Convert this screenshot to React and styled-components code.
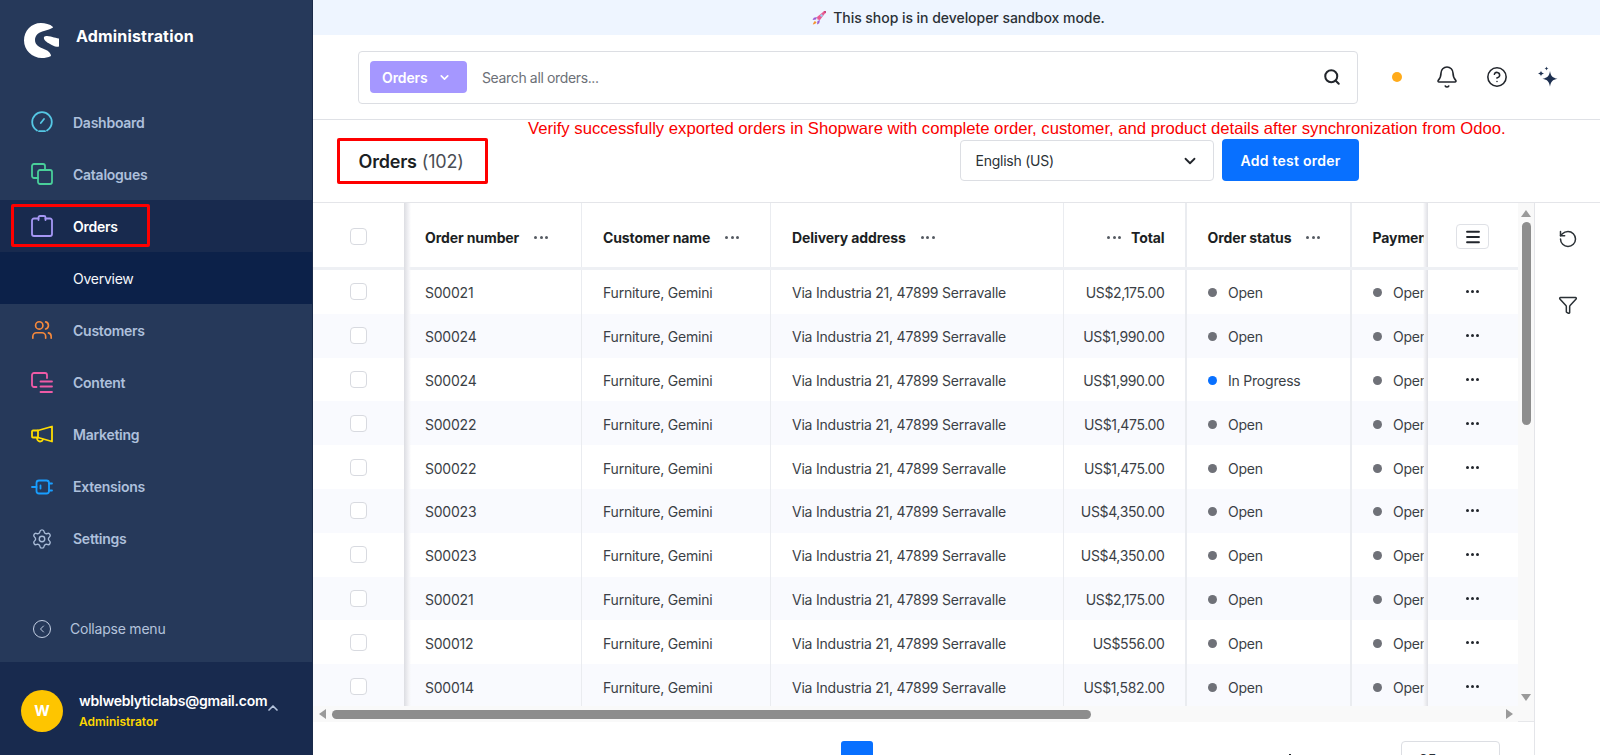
import React from "react";
import styled, { createGlobalStyle } from "styled-components";
import { Users, Settings, ChevronDown, ChevronUp, ChevronLeft, Search, Bell, CircleHelp, RotateCcw, Filter, Menu } from "lucide-react";

const Global = createGlobalStyle`
  html, body { margin: 0; padding: 0; height: 100%; overflow: hidden; background: #fff; }
  body { font-family: Inter, "Noto Sans", sans-serif; font-size: 14px; color: #2b3136; }
  * { box-sizing: border-box; }
`;

const Page = styled.div`display: flex; width: 1600px; height: 755px; overflow: hidden;`;

const Sidebar = styled.aside`
  width: 313px; flex: none; height: 100%; display: flex; flex-direction: column;
  background: #26395a; border-right: 1px solid #1a2a49;
`;
const Brand = styled.div`
  height: 96px; flex: none; display: flex; align-items: flex-start; gap: 16px; padding: 22px 0 0 24px;
`;
const BrandName = styled.span`font-size: 16px; font-weight: 700; color: #fff; line-height: 28px; letter-spacing: .18px;`;
const Nav = styled.nav`display: flex; flex-direction: column; padding-top: 0;`;
const NavRow = styled.div`
  position: relative; height: 52.1px; display: flex; align-items: center; gap: 20px; padding-left: 31px;
  font-size: 14px; font-weight: 600; letter-spacing: -.25px;
  color: ${p => p.$active ? "#fff" : p.$sub ? "#f6f8fc" : "#aec0dc"};
  background: ${p => p.$active ? "#182a4e" : p.$sub ? "#0c2149" : "transparent"};
  ${p => p.$sub && "padding-left: 73px; font-weight: 400;"}
`;
const RedFrame = styled.div`
  position: absolute; left: 11px; top: 4px; width: 139px; height: 43px;
  border: 3px solid #fe0000; border-radius: 2px;
`;
const IconSlot = styled.span`
  width: 22px; height: 22px; display: inline-flex; align-items: center; justify-content: center; flex: none;
  color: ${p => p.$c};
`;
const Collapse = styled.div`
  margin-top: auto; height: 33px; margin-bottom: 17px; display: flex; align-items: center; gap: 19px; padding-left: 33px;
  color: #b4c3dc; font-size: 14px; font-weight: 400; letter-spacing: -.22px;
`;
const CollapseCircle = styled.span`
  width: 18px; height: 18px; border-radius: 50%; border: 1.5px solid #c3cfe3; display: inline-flex;
  align-items: center; justify-content: center; color: #c3cfe3;
`;
const Account = styled.div`
  height: 93px; flex: none; background: #182a4e; display: flex; align-items: center; padding: 4px 0 0 21px; gap: 16px;
`;
const Avatar = styled.div`
  width: 42px; height: 42px; border-radius: 50%; background: #fec500; color: #fff; font-weight: 700; font-size: 15px;
  display: flex; align-items: center; justify-content: center; flex: none;
`;
const AccountText = styled.div`display: flex; flex-direction: column; gap: 4px; width: 188px;`;
const Email = styled.span`font-size: 14px; font-weight: 600; color: #fff; white-space: nowrap; line-height: 18px; letter-spacing: -.24px;`;
const Role = styled.span`font-size: 12px; font-weight: 600; color: #fed700; line-height: 16px;`;
const AccountChevron = styled.span`color: #b4c3dc; display: inline-flex; margin: -5px 0 0 -18px;`;

const Main = styled.main`flex: 1; min-width: 0; height: 100%; display: flex; flex-direction: column;`;
const Banner = styled.div`
  height: 35px; flex: none; background: #eef5ff; display: flex; align-items: center; justify-content: center; gap: 6px;
  font-size: 14px; font-weight: 500; color: #2b3136; letter-spacing: -.04px; padding-left: 3px;
`;
const TopBar = styled.header`
  height: 85px; flex: none; display: flex; align-items: center; padding: 0 0 0 45px; border-bottom: 1.5px solid #dfe1e6;
`;
const SearchBox = styled.div`
  width: 1000px; height: 53px; flex: none; border: 1.5px solid #dcdee3; border-radius: 4px; display: flex; align-items: center;
  padding: 0 16px 0 11px;
`;
const ScopeTag = styled.div`
  width: 97px; height: 32px; border-radius: 4px; background: #a597ff; color: #fff; font-weight: 600; font-size: 14px;
  display: flex; align-items: center; gap: 10px; padding-left: 12px; letter-spacing: -.1px;
`;
const Placeholder = styled.span`margin-left: 15px; color: #6c7077; font-size: 14px; flex: 1; letter-spacing: -.36px;`;
const TopActions = styled.div`display: flex; align-items: center; margin-left: 34px; gap: 28px;`;
const StatusDot = styled.span`width: 10px; height: 10px; border-radius: 50%; background: #ffab1b; margin-right: 6px;`;
const BellIcon = styled(Bell)`margin: 0 -1px;`;

const SectionBar = styled.section`
  position: relative; height: 83px; flex: none; display: flex; align-items: flex-start; padding: 18px 241px 0 24px;
  border-bottom: 1.5px solid #e4e5e9;
`;
const Annotation = styled.div`
  position: absolute; left: 215px; top: 0; font-family: "Liberation Sans", Arial, sans-serif; font-size: 16.68px; color: #f90000;
  line-height: 18px; white-space: nowrap;
`;
const Title = styled.h1`
  margin: 0; padding: 0 0 0 18.500px; height: 46px; width: 151px; border: 3px solid #fe0000; border-radius: 2px; display: flex; align-items: center; gap: 5px;
  font-size: 18px; font-weight: 600; color: #1c1f24; white-space: nowrap; letter-spacing: -.2px;
  span { font-weight: 400; color: #4a4e55; }
`;
const SectionControls = styled.div`margin-left: auto; margin-top: 1px; display: flex; gap: 8px; align-items: flex-start;`;
const LangSelect = styled.div`
  width: 254px; height: 41px; margin-top: 1px; border: 1.5px solid #dcdee3; border-radius: 4px; display: flex; align-items: center; justify-content: space-between;
  padding: 0 14px 0 14.500px; font-size: 14px; color: #2b3136; letter-spacing: -.25px;
`;
const PrimaryButton = styled.button`
  width: 137px; height: 42px; border: 0; border-radius: 4px; background: #0870ff; color: #fff; font: 600 14px Inter, sans-serif; letter-spacing: .25px;
`;

const Body = styled.div`flex: 1; min-height: 0; display: flex;`;
const Content = styled.div`width: 1222px; flex: none; display: flex; flex-direction: column; border-right: 1.5px solid #e4e5e9;`;
const Rail = styled.div`flex: 1; display: flex; flex-direction: column; align-items: center; gap: 46px; padding-top: 26px; color: #2b3136;`;

const TableFrame = styled.div`height: 519px; flex: none; display: flex; border-bottom: 1.5px solid #e6e7ea;`;
const TableColumn = styled.div`width: 1205px; flex: none; display: flex; flex-direction: column;`;
const Table = styled.div`height: 503px; overflow: hidden; flex: none;`;
const Row = styled.div`
  display: flex; height: ${p => p.$head ? "67px" : "43.8px"};
  background: ${p => p.$odd ? "#f9fafe" : "#fff"};
  ${p => p.$head && "border-bottom: 3px solid #eef0f4;"}
`;
const CheckCell = styled.div`
  position: relative; width: 91px; flex: none; display: flex; align-items: center; justify-content: center; padding: ${p => p.$head ? "3px 1px 0 0" : "0 1px 0 0"};
  &::after { content: ""; position: absolute; top: 0; bottom: ${p => p.$head ? "-3px" : "0"}; right: -7px; width: 7px; background: linear-gradient(90deg, #dcdde2, #f4f4f7 70%, transparent); z-index: 1; }
`;
const CheckBox = styled.span`width: 17px; height: 17px; border: 1.5px solid #d8dae0; border-radius: 4px; background: #fff; display: block;`;
const Scroller = styled.div`flex: 1; min-width: 0; display: flex; overflow: hidden;`;
const Cell = styled.div`
  width: ${p => p.$w}px; flex: none; display: flex; align-items: center; padding: ${p => p.$head ? "5px 20px 0 21px" : "2px 20px 0 21px"}; white-space: nowrap;
  ${p => p.$right && "justify-content: flex-end;"}
  ${p => !p.$last && `border-right: ${p.$thick ? 2 : 1}px solid #eaecf0;`}
  color: ${p => p.$head ? "#1c1f24" : "#3b3f46"};
  font-weight: ${p => p.$head ? 700 : 400};
  letter-spacing: ${p => p.$head ? "-.1px" : p.$right ? "-.36px" : "-.22px"};
`;
const HeadDots = styled.span`
  color: #555a62; display: inline-flex; gap: 2.500px; margin-left: ${p => p.$ml ?? 15}px; margin-right: ${p => p.$mr ?? 0}px;
  i { width: 3px; height: 3px; border-radius: 50%; background: currentColor; display: block; }
`;
const Dot = styled.span`width: 9px; height: 9px; border-radius: 50%; background: ${p => p.$c}; flex: none; margin: 0 11.500px 0 0;`;
const ActionCell = styled.div`
  position: relative; width: 90px; flex: none; display: flex; align-items: center; justify-content: center; padding: ${p => p.$head ? "3px 1px 0 0" : "0 1px 0 0"};
  background: inherit;
  &::before { content: ""; position: absolute; top: 0; bottom: 0; left: -5px; width: 5px; background: linear-gradient(270deg, #dfe0e5, #f3f3f6 70%, transparent); }
`;
const RowMenu = styled.span`
  display: inline-flex; gap: 2px; color: #22262c;
  i { width: 3px; height: 3px; border-radius: 50%; background: currentColor; display: block; }
`;
const MenuButton = styled.button`
  width: 33px; height: 25px; border: 1.5px solid #dfe1e6; border-radius: 4px; background: #fff; display: flex; align-items: center; justify-content: center; padding: 0; color: #22262c;
`;
const HScroll = styled.div`height: 16px; flex: none; background: #f9f9f9; display: flex; align-items: center; padding: 0 5px 0 6px; gap: 6px;`;
const HThumb = styled.div`height: 9px; width: 759px; border-radius: 5px; background: #8d8d8d;`;
const VScroll = styled.div`width: 16px; flex: none; background: #f9f9f9; display: flex; flex-direction: column; align-items: center; padding-top: 7px;`;
const VThumb = styled.div`width: 9px; height: 203px; border-radius: 5px; background: #8d8d8d; margin: 5px 0 auto;`;
const ArrowGlyph = styled.span`
  width: 0; height: 0; display: block; flex: none;
  ${p => p.$d === "up" && "border-left: 5px solid transparent; border-right: 5px solid transparent; border-bottom: 7px solid #9a9a9a;"}
  ${p => p.$d === "down" && "border-left: 5px solid transparent; border-right: 5px solid transparent; border-top: 7px solid #9a9a9a; margin-bottom: 20px;"}
  ${p => p.$d === "left" && "border-top: 5px solid transparent; border-bottom: 5px solid transparent; border-right: 7px solid #9a9a9a;"}
  ${p => p.$d === "right" && "border-top: 5px solid transparent; border-bottom: 5px solid transparent; border-left: 7px solid #9a9a9a; margin-left: auto;"}
`;
const Pager = styled.div`flex: 1; display: flex; padding: 19px 0 0 528px; overflow: hidden;`;
const PageBtn = styled.div`width: 32px; height: 32px; border-radius: 3px; background: #0870ff; flex: none;`;
const PageNext = styled.span`margin: 13px 0 0 416px; width: 2px; height: 8px; background: #22262c; flex: none;`;
const PerPage = styled.div`margin-left: 110px; width: 99px; height: 36px; flex: none; border: 1.5px solid #dcdee3; border-radius: 4px; padding: 9px 0 0 17px; font-weight: 500;`;

const s = { fill: "none", stroke: "currentColor", strokeWidth: 1.8, strokeLinecap: "round", strokeLinejoin: "round" };

const Logo = () => (
  <svg width="36" height="37" viewBox="0 0 36 37" fill="#fff">
    <path d="M29 5C26 2 21 1 17 1 7 1 0 9 0 18.500C0 28 8 36 18 36c3 0 6-.5 9-2 0-2.500-2-5-6-6.500-6-2.500-10-4.500-10-9.500 0-5 4-8 9-9 3-1 7-2 9-3.500Z" />
    <path d="M20 15c2-2 7-.5 10 .5 2 .5 5 1 5 1v8c-4 1-6-1-9-2.500-3-1.500-7-4.500-6-7Z" />
  </svg>
);
const svgProps = { width: 22, height: 22, viewBox: "0 0 22 22", ...s };
const Gauge = () => (
  <svg {...svgProps}>
    <path d="M6 19.500A10 10 0 0 1 1.200 11 9.800 9.800 0 0 1 11 1.200 9.800 9.800 0 0 1 20.800 11 10 10 0 0 1 16 19.500" />
    <path d="M8 20.200h6M9.800 12l3.200-4" />
  </svg>
);
const Copies = () => (
  <svg {...svgProps}>
    <rect x="7" y="7" width="14" height="14" rx="2" />
    <path d="M7 15H3a2 2 0 0 1-2-2V3a2 2 0 0 1 2-2h9a2 2 0 0 1 2 2v4" />
  </svg>
);
const Bag = () => (
  <svg {...svgProps}>
    <path d="M7.500 3.500H3a2 2 0 0 0-2 2V19a2 2 0 0 0 2 2h16a2 2 0 0 0 2-2V5.500a2 2 0 0 0-2-2h-4.500" />
    <path d="M7.500 5V2.500A1.500 1.500 0 0 1 9 1h4a1.500 1.500 0 0 1 1.500 1.500V5" />
  </svg>
);
const ContentIcon = () => (
  <svg {...svgProps}>
    <path d="M5.500 15H3a2 2 0 0 1-2-2V3a2 2 0 0 1 2-2h11a2 2 0 0 1 2 2v3" />
    <path d="M9.500 9.500H21M9.500 14.500H21M9.500 20H21" />
  </svg>
);
const Megaphone = () => (
  <svg {...svgProps}>
    <path d="M21 2.500v15L7 13.500H2a1 1 0 0 1-1-1v-5a1 1 0 0 1 1-1h5L21 2.500Z" />
    <path d="M7 6.500v7M6 14c0 2 1.500 3.500 3 3.500 1.500 0 2.500-.7 3-2" />
  </svg>
);
const Plug = () => (
  <svg {...svgProps}>
    <rect x="5.500" y="4.500" width="12.500" height="13" rx="2.500" />
    <path d="M1 11h4.500M18 7.500h3M18 14.500h3M9.500 9.500v3" />
  </svg>
);
const Sparkles = () => (
  <svg width="24" height="24" viewBox="0 0 24 24" fill="#1e3050">
    <path d="M14 6c.8 5 2.500 6.800 7.500 7.800-5 1-6.700 2.700-7.500 8-.8-5.300-2.500-7-7.500-8 5-1 6.700-2.800 7.500-7.800Z" />
    <path d="M5 5.500c.3 1.900 1 2.500 3 3-2 .5-2.700 1.100-3 3-.3-1.900-1-2.500-3-3 2-.5 2.700-1.100 3-3Z" />
    <path d="M10.500 1.500c.2 1.200.6 1.600 2 2-1.400.4-1.800.8-2 2-.2-1.200-.6-1.600-2-2 1.400-.4 1.800-.8 2-2Z" />
  </svg>
);
const Rocket = () => (
  <svg width="16" height="16" viewBox="0 0 16 16">
    <path d="M6 7 13 1.200c1-.5 2 .3 1.700 1.400L9 10 6.500 9.500Z" fill="#ea5a92" />
    <path d="M12.500 1.500 15 1l-.3 2.600Z" fill="#c23a70" />
    <circle cx="10.500" cy="5.500" r="1.200" fill="#9ad4f0" />
    <path d="M6 7 2.800 7.800 1.500 10l3.500-.5ZM9 10l-.8 3.200L6 14.500l.5-3.500Z" fill="#9a5bd1" />
    <path d="M4 11c-1 .5-1.800 2-2.200 3.600C3.500 14.200 5 13.500 5.500 12.500Z" fill="#f59331" />
  </svg>
);

const navTop = [
  ["Dashboard", "#55c7e4", <Gauge />],
  ["Catalogues", "#49cf9a", <Copies />],
];
const navBottom = [
  ["Customers", "#f5893c", <Users size={22} strokeWidth={1.8} />],
  ["Content", "#ee5ba6", <ContentIcon />],
  ["Marketing", "#fedc02", <Megaphone />],
  ["Extensions", "#189eff", <Plug />],
  ["Settings", "#a9bcd8", <Settings size={22} strokeWidth={1.5} />],
];

const rows = [
  ["S00021", "US$2,175.00"], ["S00024", "US$1,990.00"], ["S00024", "US$1,990.00", true],
  ["S00022", "US$1,475.00"], ["S00022", "US$1,475.00"], ["S00023", "US$4,350.00"],
  ["S00023", "US$4,350.00"], ["S00021", "US$2,175.00"], ["S00012", "US$556.00"], ["S00014", "US$1,582.00"],
];
const widths = [178, 189, 293, 122.5, 165, 200];
const Dots3 = p => <HeadDots {...p}><i /><i /><i /></HeadDots>;

export default function App() {
  return (
    <Page>
      <Global />
      <Sidebar>
        <Brand><Logo /><BrandName>Administration</BrandName></Brand>
        <Nav>
          {navTop.map(([t, c, i]) => <NavRow key={t}><IconSlot $c={c}>{i}</IconSlot>{t}</NavRow>)}
          <NavRow $active><IconSlot $c="#a597f5"><Bag /></IconSlot>Orders<RedFrame /></NavRow>
          <NavRow $sub>Overview</NavRow>
          {navBottom.map(([t, c, i]) => <NavRow key={t}><IconSlot $c={c}>{i}</IconSlot>{t}</NavRow>)}
        </Nav>
        <Collapse><CollapseCircle><ChevronLeft size={12} strokeWidth={2} /></CollapseCircle>Collapse menu</Collapse>
        <Account>
          <Avatar>W</Avatar>
          <AccountText><Email>wblweblyticlabs@gmail.com</Email><Role>Administrator</Role></AccountText>
          <AccountChevron><ChevronUp size={16} strokeWidth={2.5} /></AccountChevron>
        </Account>
      </Sidebar>
      <Main>
        <Banner><Rocket />This shop is in developer sandbox mode.</Banner>
        <TopBar>
          <SearchBox>
            <ScopeTag>Orders<ChevronDown size={13} strokeWidth={3} /></ScopeTag>
            <Placeholder>Search all orders...</Placeholder>
            <Search size={18} strokeWidth={2.7} color="#22262c" />
          </SearchBox>
          <TopActions>
            <StatusDot />
            <BellIcon size={24} strokeWidth={1.6} color="#22262c" />
            <CircleHelp size={22} strokeWidth={1.7} color="#22262c" />
            <Sparkles />
          </TopActions>
        </TopBar>
        <SectionBar>
          <Annotation>Verify successfully exported orders in Shopware with complete order, customer, and product details after synchronization from Odoo.</Annotation>
          <Title>Orders <span>(102)</span></Title>
          <SectionControls>
            <LangSelect>English (US)<ChevronDown size={18} strokeWidth={2.4} color="#22262c" /></LangSelect>
            <PrimaryButton>Add test order</PrimaryButton>
          </SectionControls>
        </SectionBar>
        <Body>
          <Content>
            <TableFrame>
              <TableColumn>
                <Table>
                  <Row $head>
                    <CheckCell $head><CheckBox /></CheckCell>
                    <Scroller>
                      <Cell $head $w={widths[0]}>Order number<Dots3 /></Cell>
                      <Cell $head $w={widths[1]}>Customer name<Dots3 /></Cell>
                      <Cell $head $w={widths[2]}>Delivery address<Dots3 /></Cell>
                      <Cell $head $right $thick $w={widths[3]}><Dots3 $ml={0} $mr={10} />Total</Cell>
                      <Cell $head $thick $w={widths[4]}>Order status<Dots3 /></Cell>
                      <Cell $head $last $w={widths[5]}>Payment status</Cell>
                    </Scroller>
                    <ActionCell $head><MenuButton><Menu size={18} strokeWidth={2.4} /></MenuButton></ActionCell>
                  </Row>
                  {rows.map(([no, total, prog], i) => (
                    <Row key={i} $odd={i % 2 === 1}>
                      <CheckCell><CheckBox /></CheckCell>
                      <Scroller>
                        <Cell $w={widths[0]}>{no}</Cell>
                        <Cell $w={widths[1]}>Furniture, Gemini</Cell>
                        <Cell $w={widths[2]}>Via Industria 21, 47899 Serravalle</Cell>
                        <Cell $right $thick $w={widths[3]}>{total}</Cell>
                        <Cell $thick $w={widths[4]}><Dot $c={prog ? "#0870ff" : "#6f7178"} />{prog ? "In Progress" : "Open"}</Cell>
                        <Cell $last $w={widths[5]}><Dot $c="#6f7178" />Open</Cell>
                      </Scroller>
                      <ActionCell><RowMenu><i /><i /><i /></RowMenu></ActionCell>
                    </Row>
                  ))}
                </Table>
                <HScroll><ArrowGlyph $d="left" /><HThumb /><ArrowGlyph $d="right" /></HScroll>
              </TableColumn>
              <VScroll><ArrowGlyph $d="up" /><VThumb /><ArrowGlyph $d="down" /></VScroll>
            </TableFrame>
            <Pager>
              <PageBtn />
              <PageNext />
              <PerPage>25</PerPage>
            </Pager>
          </Content>
          <Rail>
            <RotateCcw size={20} strokeWidth={1.8} />
            <Filter size={20} strokeWidth={1.8} />
          </Rail>
        </Body>
      </Main>
    </Page>
  );
}
